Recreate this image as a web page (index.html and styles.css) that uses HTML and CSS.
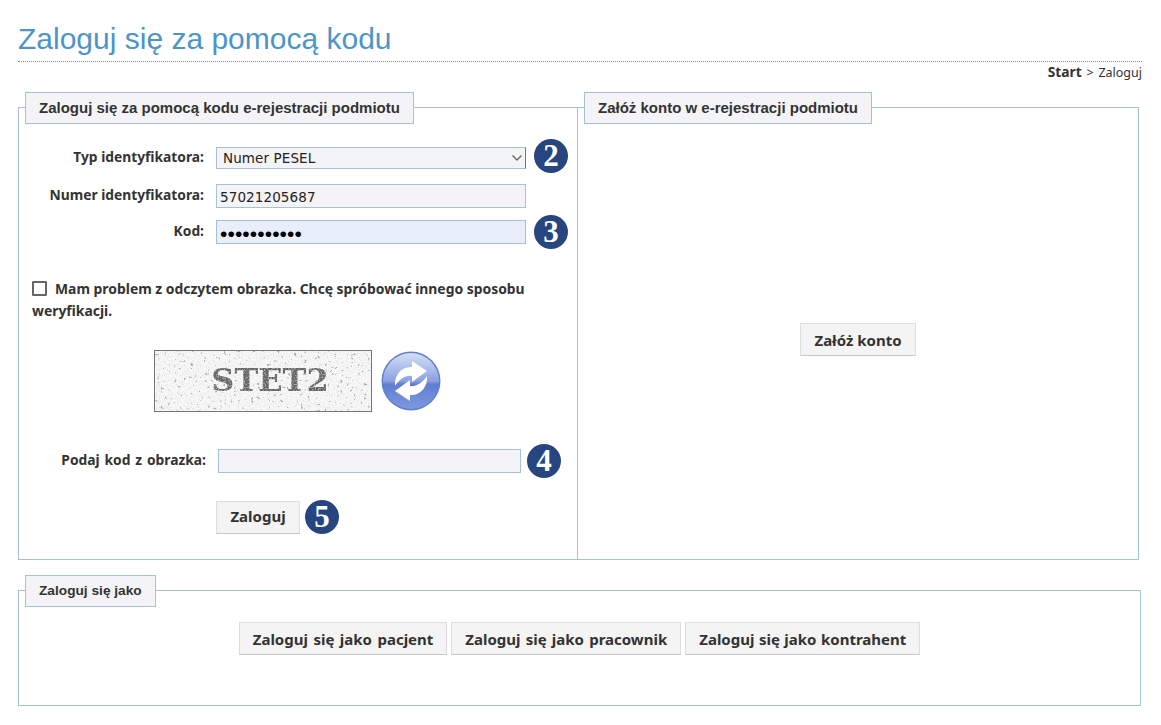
FILE: index.html
```html
<!DOCTYPE html>
<html lang="pl">
<head>
<meta charset="utf-8">
<title>Zaloguj się za pomocą kodu</title>
<link rel="stylesheet" href="styles.css">
</head>
<body>
<div class="page">
  <h1 class="title">Zaloguj się za pomocą kodu</h1>
  <div class="crumbs"><b>Start</b> &gt; Zaloguj</div>
  <div class="columns">
    <fieldset class="box box-left">
      <legend class="box-legend">Zaloguj się za pomocą kodu e-rejestracji podmiotu</legend>
      <div class="row row-type">
        <label class="row-label">Typ identyfikatora:</label>
        <select class="field field-select"><option>Numer PESEL</option></select>
        <span class="badge">2</span>
      </div>
      <div class="row row-id">
        <label class="row-label">Numer identyfikatora:</label>
        <input class="field field-text" type="text" value="57021205687">
      </div>
      <div class="row row-code">
        <label class="row-label">Kod:</label>
        <input class="field field-text field-filled" type="password" value="12345678901">
        <span class="badge">3</span>
      </div>
      <div class="check">
        <span class="check-box"></span>Mam problem z odczytem obrazka. Chcę spróbować innego sposobu weryfikacji.
      </div>
      <div class="captcha-row">
        <svg class="captcha" width="218" height="62" viewBox="0 0 218 62" xmlns="http://www.w3.org/2000/svg">
          <defs>
            <filter id="speck" x="0" y="0" width="100%" height="100%">
              <feTurbulence type="fractalNoise" baseFrequency="0.3" numOctaves="2" seed="11"/>
              <feColorMatrix type="matrix" values="0 0 0 0 0.4  0 0 0 0 0.4  0 0 0 0 0.4  10 0 0 0 -6.7"/>
            </filter>
            <filter id="fine" x="0" y="0" width="100%" height="100%">
              <feTurbulence type="fractalNoise" baseFrequency="0.9" numOctaves="1" seed="3"/>
              <feColorMatrix type="matrix" values="0 0 0 0 0.78  0 0 0 0 0.78  0 0 0 0 0.78  4 0 0 0 -1.9"/>
            </filter>
            <filter id="holes" x="0" y="0" width="100%" height="100%">
              <feTurbulence type="fractalNoise" baseFrequency="0.7" numOctaves="1" seed="5"/>
              <feColorMatrix type="matrix" values="0 0 0 0 1  0 0 0 0 1  0 0 0 0 1  5 0 0 0 -2.4"/>
            </filter>
            <filter id="soft"><feGaussianBlur stdDeviation="0.7"/></filter>
          </defs>
          <rect width="218" height="62" fill="#f7f7f7"/>
          <rect width="218" height="62" filter="url(#fine)"/>
          <rect width="218" height="62" filter="url(#speck)"/>
          <text class="captcha-text" x="116" y="41" text-anchor="middle" filter="url(#soft)">STET2</text>
          <rect width="218" height="62" filter="url(#holes)" opacity="0.45"/>
          <rect x="0.5" y="0.5" width="217" height="61" fill="none" stroke="#777"/>
        </svg>
        <svg class="refresh" width="60" height="60" viewBox="0 0 60 60" xmlns="http://www.w3.org/2000/svg">
          <defs>
            <linearGradient id="ball" x1="0" y1="0" x2="0" y2="1">
              <stop offset="0" stop-color="#d4dff6"/>
              <stop offset="0.5" stop-color="#8aa2e2"/>
              <stop offset="0.56" stop-color="#5f7ed2"/>
              <stop offset="1" stop-color="#7f99de"/>
            </linearGradient>
          </defs>
          <circle cx="30" cy="30" r="29.5" fill="#5f7fd0"/>
          <circle cx="30" cy="30" r="28" fill="url(#ball)"/>
          <path fill="#fff" d="M14 35C13 24 21 15 31 16L31 10L46 20L31 31L31 25C24 24 18 29 14 35Z"/>
          <path fill="#fff" d="M46 25C47 36 39 45 29 44L29 50L14 40L29 29L29 35C36 36 42 31 46 25Z"/>
        </svg>
      </div>
      <div class="row row-captcha">
        <label class="row-label">Podaj kod z obrazka:</label>
        <input class="field field-text" type="text">
        <span class="badge">4</span>
      </div>
      <div class="submit-row">
        <button class="btn btn-submit" type="button">Zaloguj</button>
        <span class="badge">5</span>
      </div>
    </fieldset>
    <fieldset class="box box-right">
      <legend class="box-legend">Załóż konto w e-rejestracji podmiotu</legend>
      <div class="center-wrap">
        <button class="btn" type="button">Załóż konto</button>
      </div>
    </fieldset>
  </div>
  <fieldset class="box box-bottom">
    <legend class="box-legend">Zaloguj się jako</legend>
    <div class="role-row">
      <button class="btn btn-patient" type="button">Zaloguj się jako pacjent</button>
      <button class="btn btn-worker" type="button">Zaloguj się jako pracownik</button>
      <button class="btn btn-contractor" type="button">Zaloguj się jako kontrahent</button>
    </div>
  </fieldset>
</div>
</body>
</html>
```
FILE: styles.css
```css
* { box-sizing: border-box; }
html, body { margin: 0; padding: 0; background: #fff; }
body { font-family: "Noto Sans", sans-serif; color: #333; }
.page { padding: 0 19px 0 18px; }
.title {
  margin: 0;
  height: 62px;
  padding-top: 22px;
  font: 400 30px/34px "Liberation Sans", sans-serif;
  color: #4e95c6;
  border-bottom: 1px dotted #5a9ac4;
}
.crumbs {
  height: 30px;
  padding-top: 2px;
  text-align: right;
  font-size: 12.5px;
  line-height: 15px;
  word-spacing: 1.5px;
  color: #333;
}
.crumbs b { font-size: 13.8px; }
.columns { display: flex; height: 468px; margin-right: 3px; }
.box {
  margin: 0;
  padding: 0;
  min-width: 0;
  border: 1px solid #a3c2d8;
}
.box-left { width: 560px; flex: none; }
.box-right { flex: 1; margin-left: -1px; display: flex; flex-direction: column; }
.box-bottom { height: 131px; margin: 15px 1px 0 0; }
.box-legend {
  margin-left: 6px;
  padding: 0 13px;
  height: 31px;
  font: 700 15px/29px "Liberation Sans", sans-serif;
  color: #333;
  background: #f4f4f6;
  border: 1px solid #a3c2d8;
  border-bottom: 0;
  box-shadow: 0 1px 0 #a3c2d8;
}
.box-bottom .box-legend { font-size: 13.7px; }
.row { display: flex; align-items: center; }
.row-type { margin-top: 24px; height: 22px; }
.row-id { margin-top: 15px; height: 24px; }
.row-code { margin-top: 12px; height: 24px; }
.row-captcha { margin-top: 37px; height: 24px; }
.row-label {
  width: 185px;
  margin-right: 12px;
  padding-bottom: 4px;
  text-align: right;
  font-size: 13.8px;
  font-weight: 700;
}
.row-captcha .row-label { width: 187px; word-spacing: 1.3px; }
.field {
  width: 310px;
  height: 100%;
  margin: 0;
  border: 1px solid #a3c2d8;
  border-radius: 0;
  background: #f4f4f6;
  font-family: "DejaVu Sans", sans-serif;
  font-size: 13.5px;
  letter-spacing: 0.1px;
  color: #222;
  outline: none;
}
.field-text { padding: 2px 3px 0; }
.field-select {
  padding-left: 6px;
  appearance: none;
  border-right-color: #777;
  background-image: url("data:image/svg+xml,%3Csvg xmlns='http://www.w3.org/2000/svg' width='12' height='8'%3E%3Cpath d='M1.5 1.5L6 6L10.5 1.5' fill='none' stroke='%23666' stroke-width='1.4'/%3E%3C/svg%3E");
  background-repeat: no-repeat;
  background-position: right 2px center;
}
.field-filled { background: #e8effb; }
input[type="password"] {
  padding: 3px 3px 0;
  font-family: "Liberation Sans", sans-serif;
  font-size: 21px;
  font-weight: 400;
  letter-spacing: 0.1px;
  color: #000;
}
.row-captcha .field { width: 303px; }
.badge {
  flex: none;
  width: 34px;
  height: 34px;
  margin: -6px 0 -6px 8px;
  border-radius: 50%;
  background: #27457f;
  color: #fff;
  text-align: center;
  font: 700 31px/34px "Liberation Serif", serif;
}
.row-type .badge { margin: -9px 0 -5px 8px; }
.row-captcha .badge { margin-left: 6px; }
.check {
  margin: 34px 30px 0 13px;
  font-size: 13.9px;
  font-weight: 700;
  line-height: 22px;
}
.check-box {
  display: inline-block;
  width: 15px;
  height: 15px;
  margin-right: 8px;
  vertical-align: -2px;
  border: 2px solid #666;
  border-radius: 1px;
  background: #fff;
}
.captcha-row { display: flex; gap: 9px; margin: 28px 0 0 135px; }
.captcha, .refresh { display: block; flex: none; }
.refresh { margin-top: 1px; }
.captcha-text {
  font: 700 32px "DejaVu Serif", serif;
  fill: #666;
}
.submit-row { display: flex; align-items: center; margin: 27px 0 0 197px; }
.btn {
  height: 33px;
  margin: 0;
  padding: 0 13px;
  border: 1px solid #ddd;
  border-bottom-color: #c8c8c8;
  background: #f4f4f4;
  font-family: "Noto Sans", sans-serif;
  font-size: 15px;
  font-weight: 700;
  color: #333;
}
.btn-submit { width: 84px; padding-bottom: 2px; }
.submit-row .badge { margin: 0 0 0 5px; }
.center-wrap { flex: 1; display: flex; align-items: center; justify-content: center; padding-bottom: 3px; }
.role-row { display: flex; justify-content: center; gap: 4px; margin-top: 16px; }
.btn-patient { word-spacing: 1.6px; }
.btn-worker { word-spacing: 1.3px; }
.btn-contractor { word-spacing: 0.6px; }
```
